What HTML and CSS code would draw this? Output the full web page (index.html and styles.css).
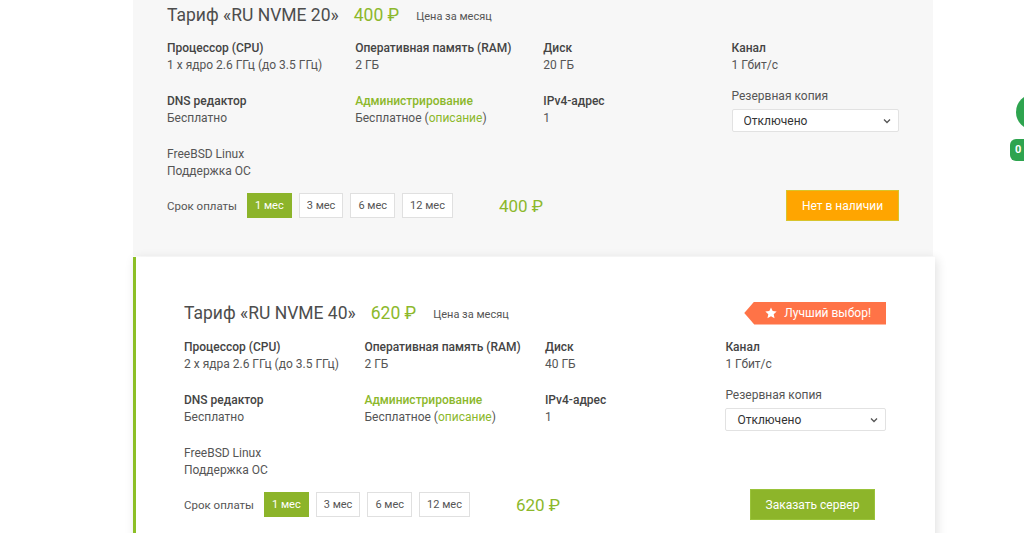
FILE: index.html
```html
<!DOCTYPE html>
<html lang="ru">
<head>
    <meta charset="UTF-8">
    <meta name="viewport" content="width=device-width, initial-scale=1.0">
    <title>Тарифы RU NVME</title>
    <link rel="stylesheet" href="styles.css">
</head>
<body>
    <div class="tariffs">
        <div class="tariff">
            <div class="tariff-head">
                <h2 class="tariff-name">Тариф «RU NVME 20»</h2>
                <span class="tariff-price">400 ₽</span>
                <span class="tariff-period">Цена за месяц</span>
            </div>
            <div class="specs">
                <div class="spec"><div class="spec-label">Процессор (CPU)</div><div class="spec-value">1 x ядро 2.6 ГГц (до 3.5 ГГц)</div></div>
                <div class="spec"><div class="spec-label">Оперативная память (RAM)</div><div class="spec-value">2 ГБ</div></div>
                <div class="spec"><div class="spec-label">Диск</div><div class="spec-value">20 ГБ</div></div>
                <div class="spec"><div class="spec-label">Канал</div><div class="spec-value">1 Гбит/с</div></div>

                <div class="spec"><div class="spec-label">DNS редактор</div><div class="spec-value">Бесплатно</div></div>
                <div class="spec"><div class="spec-label green">Администрирование</div><div class="spec-value">Бесплатное (<a href="#">описание</a>)</div></div>
                <div class="spec"><div class="spec-label">IPv4-адрес</div><div class="spec-value">1</div></div>
                <div class="spec spec-backup">
                    <div class="backup-label">Резервная копия</div>
                    <div class="select-wrap">
                        <select class="select"><option>Отключено</option></select>
                        <svg class="select-arrow" width="8" height="6" viewBox="0 0 8 6"><path d="M1 1.5 L4 4.5 L7 1.5" fill="none" stroke="#555" stroke-width="1.3"/></svg>
                    </div>
                </div>

                <div class="spec"><div class="spec-value">FreeBSD Linux</div><div class="spec-value">Поддержка ОС</div></div>
            </div>
            <div class="pay-row">
                <span class="pay-label">Срок оплаты</span>
                <div class="periods">
                    <button class="period active">1 мес</button>
                    <button class="period">3 мес</button>
                    <button class="period">6 мес</button>
                    <button class="period">12 мес</button>
                </div>
                <span class="pay-total">400 ₽</span>
                <button class="btn btn-out">Нет в наличии</button>
            </div>
        </div>

        <div class="tariff tariff-best">
            <div class="tariff-head">
                <h2 class="tariff-name">Тариф «RU NVME 40»</h2>
                <span class="tariff-price">620 ₽</span>
                <span class="tariff-period">Цена за месяц</span>
                <span class="best-badge">
                    <svg width="12" height="12" viewBox="0 0 24 24"><path d="M12 1l3.4 7.2 7.9.9-5.9 5.4 1.7 7.8L12 18.4l-7.1 3.9 1.7-7.8L.7 9.1l7.9-.9z" fill="#fff"/></svg>
                    Лучший выбор!
                </span>
            </div>
            <div class="specs">
                <div class="spec"><div class="spec-label">Процессор (CPU)</div><div class="spec-value">2 x ядра 2.6 ГГц (до 3.5 ГГц)</div></div>
                <div class="spec"><div class="spec-label">Оперативная память (RAM)</div><div class="spec-value">2 ГБ</div></div>
                <div class="spec"><div class="spec-label">Диск</div><div class="spec-value">40 ГБ</div></div>
                <div class="spec"><div class="spec-label">Канал</div><div class="spec-value">1 Гбит/с</div></div>

                <div class="spec"><div class="spec-label">DNS редактор</div><div class="spec-value">Бесплатно</div></div>
                <div class="spec"><div class="spec-label green">Администрирование</div><div class="spec-value">Бесплатное (<a href="#">описание</a>)</div></div>
                <div class="spec"><div class="spec-label">IPv4-адрес</div><div class="spec-value">1</div></div>
                <div class="spec spec-backup">
                    <div class="backup-label">Резервная копия</div>
                    <div class="select-wrap">
                        <select class="select"><option>Отключено</option></select>
                        <svg class="select-arrow" width="8" height="6" viewBox="0 0 8 6"><path d="M1 1.5 L4 4.5 L7 1.5" fill="none" stroke="#555" stroke-width="1.3"/></svg>
                    </div>
                </div>

                <div class="spec"><div class="spec-value">FreeBSD Linux</div><div class="spec-value">Поддержка ОС</div></div>
            </div>
            <div class="pay-row">
                <span class="pay-label">Срок оплаты</span>
                <div class="periods">
                    <button class="period active">1 мес</button>
                    <button class="period">3 мес</button>
                    <button class="period">6 мес</button>
                    <button class="period">12 мес</button>
                </div>
                <span class="pay-total">620 ₽</span>
                <button class="btn btn-order">Заказать сервер</button>
            </div>
        </div>
    </div>

    <div class="chat-bubble"></div>
    <div class="chat-count">0</div>
</body>
</html>
```

FILE: styles.css
```css
* {
    margin: 0;
    padding: 0;
    box-sizing: border-box;
}

body {
    font-family: Roboto, 'Noto Sans', sans-serif;
    font-size: 12px;
    color: #555;
    background: #fff;
    overflow: hidden;
}

a {
    color: #8cb82b;
    text-decoration: none;
}

.tariffs {
    width: 800px;
    margin: -39px 0 0 133px;
}

.tariff {
    background: #f7f7f7;
    padding: 42px 34px 35px;
    margin-bottom: 1px;
}

.tariff-best {
    background: #fff;
    border-left: 3px solid #8cbf26;
    padding: 44px 49px 35px 48px;
    margin-right: -2px;
    box-shadow: 2px 2px 10px rgba(0,0,0,0.12);
}

.tariff-head {
    display: flex;
    align-items: center;
    height: 24px;
    margin-bottom: 13px;
}

.tariff-best .tariff-head {
    margin-bottom: 14px;
}

.tariff-name {
    font-size: 17.5px;
    font-weight: 400;
    color: #4d4d4d;
    line-height: 24px;
}

.tariff-price {
    font-size: 17.5px;
    color: #8cb82b;
    margin-left: 15px;
}

.tariff-period {
    font-size: 11px;
    color: #555;
    margin-left: 17px;
    margin-top: 3px;
}

.best-badge {
    margin-left: auto;
    display: flex;
    align-items: center;
    gap: 7px;
    height: 23px;
    padding: 0 15px 0 21px;
    background: #ff7347;
    color: #fff;
    font-size: 12px;
    clip-path: polygon(10px 0, 100% 0, 100% 100%, 10px 100%, 0 50%);
}

.specs {
    display: grid;
    grid-template-columns: 1fr 1fr 1fr 0.89fr;
    row-gap: 19px;
}

.spec {
    line-height: 17px;
}

.spec-label {
    font-weight: 500;
    color: #444;
}

.spec-label.green {
    color: #8cb82b;
}

.spec-value {
    color: #555;
}

.spec-backup {
    margin: -5px 0 -5px;
}

.backup-label {
    color: #555;
    margin-bottom: 4px;
}

.select-wrap {
    position: relative;
}

.select {
    appearance: none;
    -webkit-appearance: none;
    width: 100%;
    height: 23px;
    padding: 0 11px;
    border: 1px solid #e2e2e2;
    border-radius: 2px;
    background: #fff;
    font-family: inherit;
    font-size: 12px;
    color: #333;
}

.select-arrow {
    position: absolute;
    right: 8px;
    top: 9px;
}

.pay-row {
    display: flex;
    align-items: center;
    margin-top: 10px;
}

.pay-label {
    font-size: 11.5px;
    color: #555;
    margin-right: 10px;
}

.periods {
    display: flex;
    gap: 7px;
}

.period {
    height: 25px;
    padding: 0 7px;
    border: 1px solid #e0e0e0;
    background: #fff;
    font-family: inherit;
    font-size: 11px;
    color: #555;
}

.period.active {
    background: #8cb42a;
    border-color: #8cb42a;
    color: #fff;
}

.pay-total {
    margin-left: 46px;
    font-size: 17px;
    color: #8cb82b;
}

.btn {
    margin-left: auto;
    border: 1px solid transparent;
    font-family: inherit;
    font-size: 12px;
    color: #fff;
    cursor: pointer;
}

.btn-out {
    width: 113px;
    height: 31px;
    background: #ffa500;
    border-color: #d8c42c;
}

.btn-order {
    width: 125px;
    height: 31px;
    background: #8db52a;
    border-color: #9ac33a;
    margin-right: 11px;
}

.chat-bubble {
    position: fixed;
    left: 1016px;
    top: 94px;
    width: 36px;
    height: 36px;
    border-radius: 50%;
    background: #2ea44f;
}

.chat-count {
    position: fixed;
    left: 1010px;
    top: 139px;
    width: 30px;
    height: 22px;
    padding-left: 5px;
    border-radius: 6px;
    background: #2ea44f;
    color: #fff;
    font-size: 11px;
    font-weight: 700;
    line-height: 22px;
}
```
